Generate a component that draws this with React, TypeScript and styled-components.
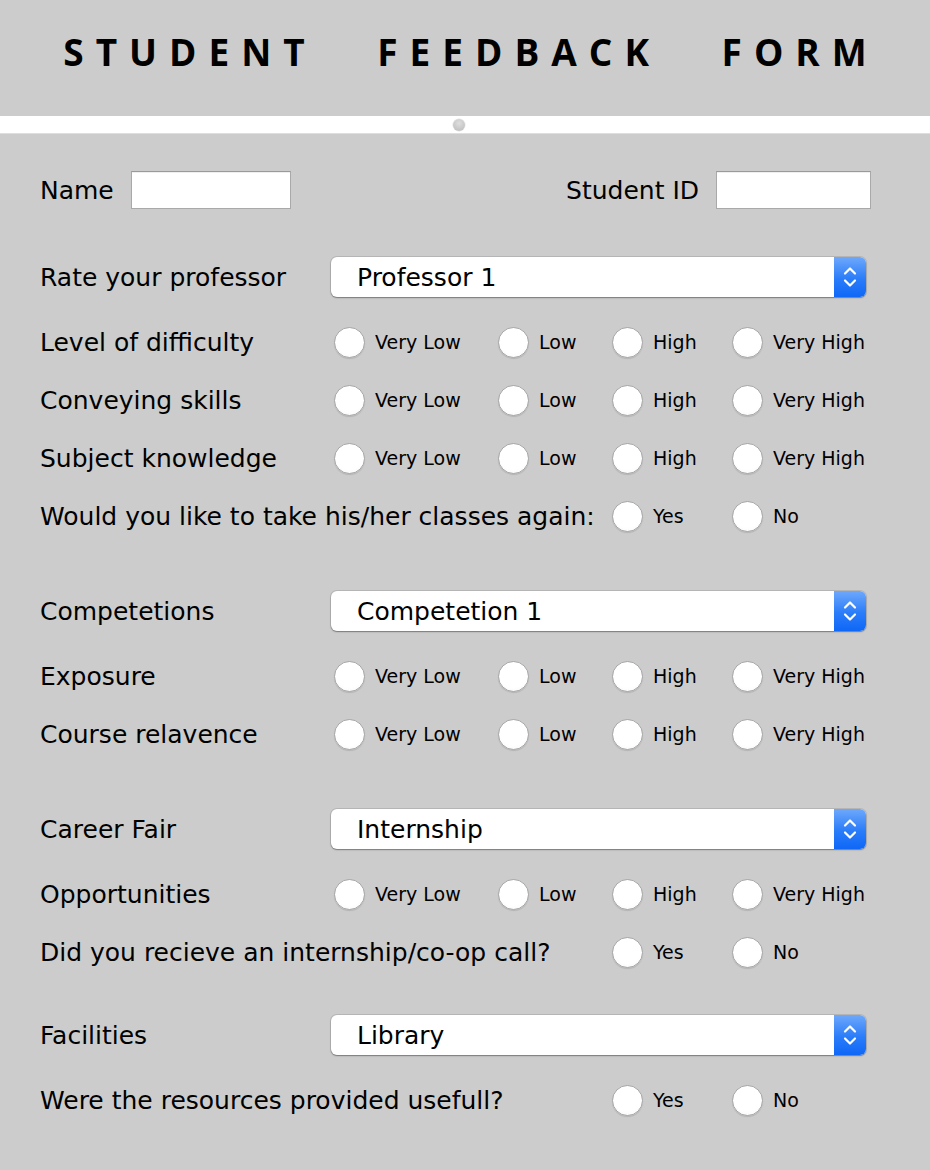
import styled, { createGlobalStyle } from "styled-components";

const GlobalStyle = createGlobalStyle`
  html, body {
    margin: 0;
    padding: 0;
    background: #cccccc;
  }
  body {
    font-family: "DejaVu Sans", "Liberation Sans", sans-serif;
    color: #000;
    min-height: 100vh;
  }
`;

const Page = styled.div`
  width: 930px;
  min-height: 1170px;
  background: #cccccc;
`;

const Header = styled.header`
  height: 116px;
  display: flex;
  align-items: center;
  justify-content: center;
`;

const Title = styled.h1`
  margin: 0;
  padding-left: 12px;
  font-family: "Open Sans", "DejaVu Sans", sans-serif;
  font-weight: 700;
  font-size: 37px;
  letter-spacing: 12px;
  word-spacing: 39px;
  line-height: 1;
  position: relative;
  top: -7px;
`;

const Divider = styled.div`
  height: 17px;
  background: #ffffff;
  border-bottom: 1px solid #dedede;
  display: flex;
  align-items: center;
  justify-content: center;
`;

const Knob = styled.span`
  width: 12px;
  height: 12px;
  border-radius: 50%;
  margin-left: -12px;
  background: radial-gradient(circle at 50% 35%, #dedede 0%, #c4c4c4 70%, #b4b4b4 100%);
  box-shadow: 0 0 0 0.5px rgba(0, 0, 0, 0.12);
`;

const Form = styled.form`
  padding: 36px 64px 40px 40px;
  display: flex;
  flex-direction: column;
`;

const Label = styled.span`
  font-size: 25px;
  white-space: nowrap;
`;

const IdRow = styled.div`
  display: flex;
  align-items: center;
  justify-content: space-between;
  height: 40px;
  margin-right: -5px;
`;

const FieldGroup = styled.label`
  display: flex;
  align-items: center;
  gap: 17px;
`;

const TextField = styled.input<{ $w: number }>`
  width: ${({ $w }) => $w}px;
  height: 38px;
  box-sizing: border-box;
  border: 1px solid #a9a9a9;
  border-top-color: #9a9a9a;
  background: #ffffff;
  box-shadow: inset 0 1px 0 #efefef;
  padding: 0 6px;
  font-family: inherit;
  font-size: 20px;
  outline: none;
`;

const Row = styled.div<{ $top: number }>`
  display: grid;
  grid-template-columns: 291px 164px 114px 120px 137px;
  align-items: center;
  height: 40px;
  margin-top: ${({ $top }) => $top}px;
`;

const WideLabel = styled(Label)`
  grid-column: 1 / 4;
`;

const Combo = styled.div`
  grid-column: 2 / 6;
  height: 40px;
  display: flex;
  background: #ffffff;
  border-radius: 6px;
  box-shadow: 0 0 0 1px rgba(0, 0, 0, 0.1), 0 1px 1.5px rgba(0, 0, 0, 0.35);
  overflow: hidden;
`;

const ComboText = styled.span`
  flex: 1;
  display: flex;
  align-items: center;
  padding-left: 26px;
  font-size: 25px;
`;

const ComboArrows = styled.span`
  width: 32px;
  display: flex;
  align-items: center;
  justify-content: center;
  background: linear-gradient(#6ea8fc, #2a7cf9 55%, #0f67f6);
`;

const Radio = styled.label<{ $col?: number }>`
  display: flex;
  align-items: center;
  gap: 10px;
  padding-left: 3px;
  font-size: 19px;
  white-space: nowrap;
  ${({ $col }) => ($col ? `grid-column: ${$col};` : "")}
`;

const Circle = styled.span`
  width: 31px;
  height: 31px;
  box-sizing: border-box;
  border-radius: 50%;
  background: radial-gradient(circle at 50% 40%, #ffffff 60%, #f4f4f4 100%);
  border: 1px solid #a8a8a8;
  box-shadow: 0 1px 1px rgba(0, 0, 0, 0.12);
  flex: none;
`;

const levels = ["Very Low", "Low", "High", "Very High"];

const Arrows = () => (
  <svg width="14" height="24" viewBox="0 0 14 24" fill="none">
    <path d="M2 8.5 L7 3.5 L12 8.5" stroke="#fff" strokeWidth="2.2" strokeLinecap="round" strokeLinejoin="round" />
    <path d="M2 15.5 L7 20.5 L12 15.5" stroke="#fff" strokeWidth="2.2" strokeLinecap="round" strokeLinejoin="round" />
  </svg>
);

const SelectRow = ({ label, value, top }: { label: string; value: string; top: number }) => (
  <Row $top={top}>
    <Label>{label}</Label>
    <Combo>
      <ComboText>{value}</ComboText>
      <ComboArrows>
        <Arrows />
      </ComboArrows>
    </Combo>
  </Row>
);

const ScaleRow = ({ label, top }: { label: string; top: number }) => (
  <Row $top={top}>
    <Label>{label}</Label>
    {levels.map((level) => (
      <Radio key={level}>
        <Circle />
        {level}
      </Radio>
    ))}
  </Row>
);

const YesNoRow = ({ label, top }: { label: string; top: number }) => (
  <Row $top={top}>
    <WideLabel>{label}</WideLabel>
    <Radio $col={4}>
      <Circle />
      Yes
    </Radio>
    <Radio $col={5}>
      <Circle />
      No
    </Radio>
  </Row>
);

export default function App() {
  return (
    <Page>
      <GlobalStyle />
      <Header>
        <Title>STUDENT FEEDBACK FORM</Title>
      </Header>
      <Divider>
        <Knob />
      </Divider>
      <Form onSubmit={(e) => e.preventDefault()}>
        <IdRow>
          <FieldGroup>
            <Label>Name</Label>
            <TextField $w={160} />
          </FieldGroup>
          <FieldGroup>
            <Label>Student ID</Label>
            <TextField $w={155} />
          </FieldGroup>
        </IdRow>

        <SelectRow label="Rate your professor" value="Professor 1" top={47} />
        <ScaleRow label="Level of difficulty" top={25} />
        <ScaleRow label="Conveying skills" top={18} />
        <ScaleRow label="Subject knowledge" top={18} />
        <YesNoRow label="Would you like to take his/her classes again:" top={18} />

        <SelectRow label="Competetions" value="Competetion 1" top={55} />
        <ScaleRow label="Exposure" top={25} />
        <ScaleRow label="Course relavence" top={18} />

        <SelectRow label="Career Fair" value="Internship" top={55} />
        <ScaleRow label="Opportunities" top={25} />
        <YesNoRow label="Did you recieve an internship/co-op call?" top={18} />

        <SelectRow label="Facilities" value="Library" top={43} />
        <YesNoRow label="Were the resources provided usefull?" top={25} />
      </Form>
    </Page>
  );
}
